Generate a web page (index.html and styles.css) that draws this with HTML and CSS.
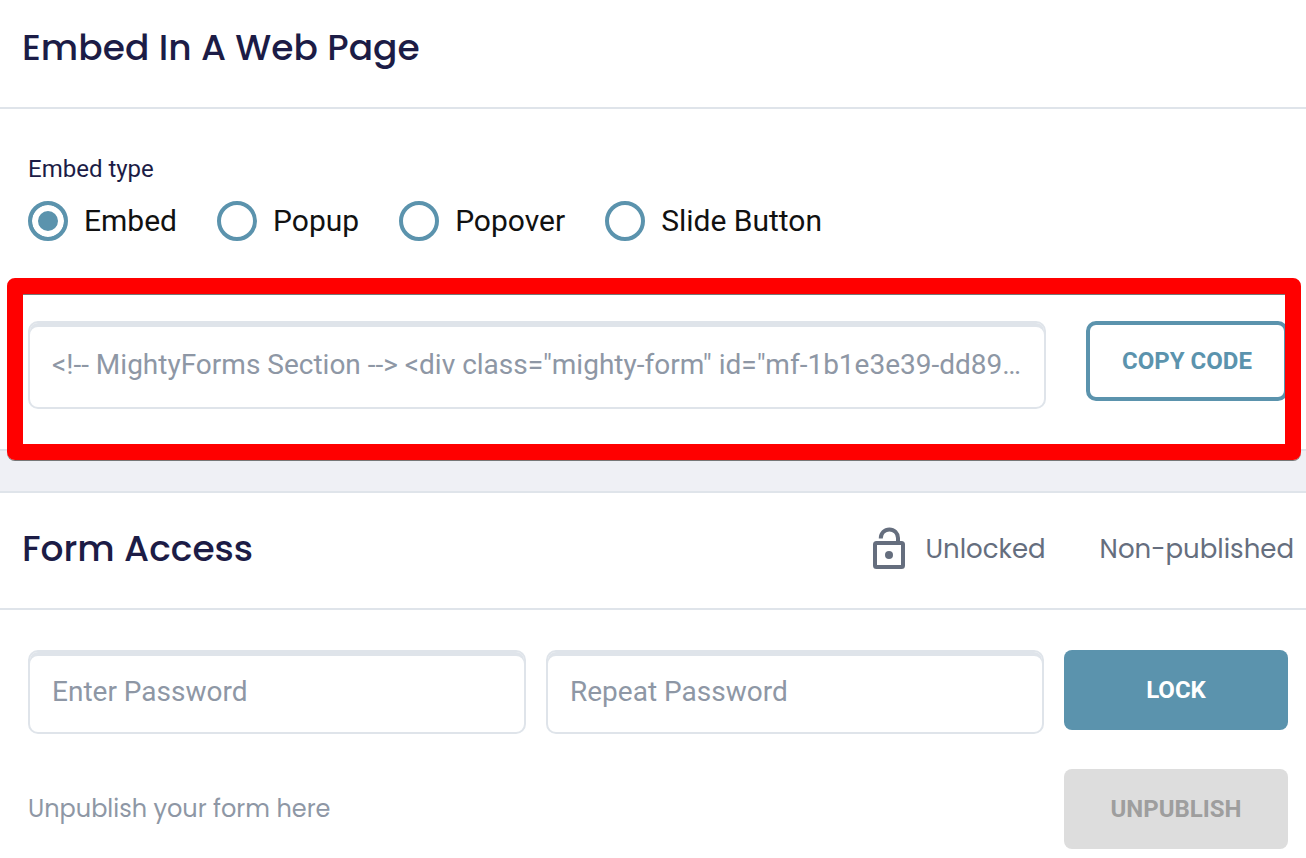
FILE: index.html
```html
<!DOCTYPE html>
<html lang="en">
  <head>
    <meta charset="UTF-8" />
    <meta name="viewport" content="width=device-width, initial-scale=1.0" />
    <title>Share Form</title>
    <link rel="stylesheet" href="styles.css">
  </head>
  <body>
    <section class="card">
      <header class="card-header">
        <h2>Embed In A Web Page</h2>
      </header>
      <div class="card-body embed-body">
        <fieldset class="embed-type">
          <legend>Embed type</legend>
          <div class="radio-group">
            <label><input type="radio" name="embed-type" value="embed" checked />Embed</label>
            <label><input type="radio" name="embed-type" value="popup" />Popup</label>
            <label><input type="radio" name="embed-type" value="popover" />Popover</label>
            <label><input type="radio" name="embed-type" value="slide" />Slide Button</label>
          </div>
        </fieldset>
        <div class="code-row">
          <input
            type="text"
            class="field code-field"
            aria-label="Embed code"
            readonly
            value="&lt;!-- MightyForms Section --&gt; &lt;div class=&quot;mighty-form&quot; id=&quot;mf-1b1e3e39-dd89-4c02&quot;&gt;&lt;/div&gt;"
          />
          <button type="button" class="btn btn-outline">Copy code</button>
          <div class="highlight"></div>
        </div>
      </div>
    </section>

    <section class="card">
      <header class="card-header">
        <h2>Form Access</h2>
        <div class="status">
          <span class="status-item">
            <svg class="lock-icon" viewBox="0 0 34 44" aria-hidden="true">
              <rect x="3" y="16" width="28" height="24" rx="1.5" />
              <path d="M8.8 11.5V11a8.6 8.6 0 0 1 17.2 0v5" />
              <circle cx="17" cy="28" r="4" />
            </svg>
            Unlocked
          </span>
          <span class="status-item">Non-published</span>
        </div>
      </header>
      <div class="card-body access-body">
        <form class="password-row">
          <input type="password" class="field" placeholder="Enter Password" aria-label="Enter Password" />
          <input type="password" class="field" placeholder="Repeat Password" aria-label="Repeat Password" />
          <button type="button" class="btn btn-primary">Lock</button>
        </form>
        <div class="publish-row">
          <p>Unpublish your form here</p>
          <button type="button" class="btn" disabled>Unpublish</button>
        </div>
      </div>
    </section>
  </body>
</html>
```

FILE: styles.css
```css
* {
  box-sizing: border-box;
}
body {
  margin: 0;
  background: #eff0f5;
  color: #1c1c46;
  font-family: Roboto, sans-serif;
}
.card {
  background: #fff;
  border-bottom: 2px solid #dfe4ea;
}
.card + .card {
  margin-top: 40px;
  border-top: 2px solid #dfe4ea;
  border-bottom: none;
}
.card-header {
  display: flex;
  align-items: center;
  justify-content: space-between;
  height: 109px;
  padding: 0 12px 12px 22px;
  border-bottom: 2px solid #dfe4ea;
}
.card + .card .card-header {
  height: 117px;
  padding-bottom: 4px;
}
h2 {
  margin: 0;
  font-family: Poppins, Inter, sans-serif;
  font-size: 36px;
  font-weight: 500;
  font-kerning: none;
  line-height: 48px;
}
.card-body {
  padding: 40px 18px 40px 28px;
}

/* embed */
.embed-type {
  margin: 0;
  padding: 0;
  border: none;
}
legend {
  padding: 0;
  font-size: 24px;
  line-height: 40px;
}
.radio-group {
  display: flex;
  flex-wrap: wrap;
  gap: 40px;
  padding-top: 12px;
}
.radio-group label {
  display: flex;
  align-items: center;
  gap: 16px;
  color: #111;
  font-size: 30px;
  line-height: 40px;
}
.radio-group input {
  appearance: none;
  width: 40px;
  height: 40px;
  margin: 0;
  border: 4px solid #5b93ad;
  border-radius: 50%;
}
.radio-group input:checked {
  background: #5b93ad;
  box-shadow: inset 0 0 0 6px #fff;
}
.code-row {
  position: relative;
  display: flex;
  gap: 40px;
  margin-top: 80px;
}
.highlight {
  position: absolute;
  inset: -43px -13px -51px -21px;
  border: 16px solid #f00;
  border-radius: 8px;
  box-shadow: 0 1px #777, inset 0 1px #777;
  pointer-events: none;
}

/* fields and buttons */
.field {
  flex: 1;
  min-width: 0;
  height: 84px;
  padding: 0 22px 2px;
  border: 2px solid #dfe4ea;
  border-radius: 10px;
  box-shadow: inset 0 4px #dfe4ea;
  color: #8e97a5;
  font-family: inherit;
  font-size: 28px;
  text-overflow: ellipsis;
}
.field::placeholder {
  color: #8e97a5;
}
.code-field {
  height: 88px;
}
.btn {
  width: 224px;
  height: 80px;
  border: none;
  border-radius: 8px;
  font-family: inherit;
  font-size: 24px;
  font-weight: 700;
  text-transform: uppercase;
}
.btn-primary {
  background: #5b93ad;
  color: #fff;
}
.btn-outline {
  width: 202px;
  background: #fff;
  border: 4px solid #5b93ad;
  border-radius: 10px;
  color: #5b93ad;
}
.btn:disabled {
  background: #ddd;
  color: #9e9e9e;
}

/* access */
.status {
  display: flex;
  gap: 54px;
  color: #656e7e;
  font-family: Poppins, Inter, sans-serif;
  font-size: 26px;
  line-height: 40px;
}
.status-item {
  display: flex;
  align-items: center;
  gap: 20px;
}
.lock-icon {
  width: 34px;
  height: 44px;
  overflow: visible;
  fill: none;
  stroke: #656e7e;
  stroke-width: 4;
}
.lock-icon circle {
  fill: #656e7e;
  stroke: none;
}
.access-body {
  padding-bottom: 9px;
}
.password-row {
  display: flex;
  gap: 20px;
}
.publish-row {
  display: flex;
  align-items: center;
  justify-content: space-between;
  margin-top: 35px;
  color: #8e97a5;
  font-family: Poppins, Inter, sans-serif;
  font-size: 24px;
  line-height: 40px;
}
.publish-row p {
  margin: 0;
}
.publish-row .btn {
  font-family: Roboto, sans-serif;
}
```
